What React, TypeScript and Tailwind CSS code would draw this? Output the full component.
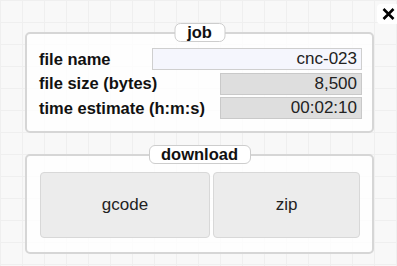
const ROWS = [
  { label: 'file name', value: 'cnc-023', editable: true },
  { label: 'file size (bytes)', value: '8,500', editable: false },
  { label: 'time estimate (h:m:s)', value: '00:02:10', editable: false },
];

function Legend({ children, width }: { children: string; width: string }) {
  return (
    <div
      className={`absolute -top-[11px] left-1/2 -translate-x-1/2 ${width} h-[19px] flex items-center justify-center rounded-[6px] border border-[#cdcdcd] bg-white text-[16.5px] font-bold leading-none text-[#111]`}
    >
      {children}
    </div>
  );
}

export default function App() {
  return (
    <div className="relative w-[397px] h-[266px] overflow-hidden bg-[#f8f8f8] bg-[linear-gradient(#efefef_1px,transparent_1px),linear-gradient(90deg,#efefef_1px,transparent_1px)] bg-[size:22px_22px] font-['Liberation_Sans',Arial,sans-serif]">
      {/* close */}
      <button className="absolute top-[4px] left-[377px] w-[22px] h-[20px] rounded-[4px] bg-white flex items-center justify-center">
        <svg width="13" height="12" viewBox="0 0 13 12">
          <path d="M1.5 1 L11.5 11 M11.5 1 L1.5 11" stroke="#000" strokeWidth="2.6" />
        </svg>
      </button>

      <div className="flex flex-col pl-[25px] pt-[32px]">
        {/* job */}
        <div className="relative w-[349px] h-[101px] rounded-[5px] border-2 border-[#d6d6d6] bg-white/80 pl-3 pr-[10px] pt-[14px]">
          <Legend width="w-[51px]">job</Legend>
          <div className="flex flex-col gap-[2.5px]">
            {ROWS.map(row => (
              <div key={row.label} className="flex items-center justify-between h-[22px]">
                <span className="text-[16.5px] font-bold text-[#111] whitespace-nowrap">{row.label}</span>
                <div
                  className={`h-[22px] flex items-center justify-end pr-[4px] border text-[17px] text-[#222] ${
                    row.editable
                      ? 'w-[210px] bg-[#f5f6fd] border-[#cfcfcf]'
                      : 'w-[142px] bg-[#dedede] border-[#c9c9c9]'
                  }`}
                >
                  {row.value}
                </div>
              </div>
            ))}
          </div>
        </div>

        {/* download */}
        <div className="relative mt-[21px] w-[349px] h-[100px] rounded-[5px] border-2 border-[#d6d6d6] bg-white/80 pl-[13px] pt-[16px]">
          <Legend width="w-[102px]">download</Legend>
          <div className="flex gap-[3px]">
            <button className="w-[170px] h-[66px] rounded-[4px] border border-[#d8d8d8] bg-[#ececec] text-[17px] text-[#222]">
              gcode
            </button>
            <button className="w-[147px] h-[66px] rounded-[4px] border border-[#d8d8d8] bg-[#ececec] text-[17px] text-[#222]">
              zip
            </button>
          </div>
        </div>
      </div>
    </div>
  );
}
